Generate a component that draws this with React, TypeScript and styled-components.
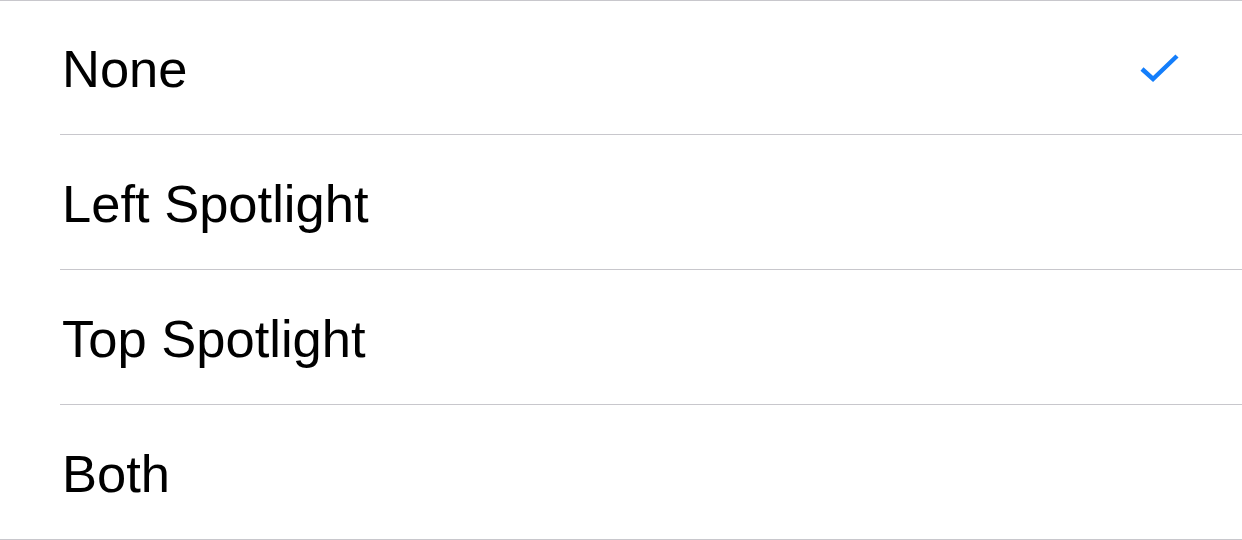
import React, { useState } from 'react';
import styled, { createGlobalStyle } from 'styled-components';

const GlobalStyle = createGlobalStyle`
  html, body {
    margin: 0;
    padding: 0;
    background: #ffffff;
  }
  body {
    font-family: "Liberation Sans", Arial, sans-serif;
    -webkit-font-smoothing: antialiased;
  }
`;

const List = styled.ul`
  list-style: none;
  margin: 0;
  padding: 0;
  width: 1242px;
  border-top: 1px solid #c8c7cc;
  border-bottom: 1px solid #c8c7cc;
`;

const Row = styled.li`
  padding-left: 60px;
  cursor: pointer;
`;

// first row is one pixel shorter, last row has the list's own bottom border
const Cell = styled.div<{ $first: boolean; $last: boolean }>`
  box-sizing: border-box;
  height: ${(p) => (p.$first ? '134px' : p.$last ? '134px' : '135px')};
  display: flex;
  align-items: center;
  justify-content: space-between;
  padding-right: 62px;
  border-bottom: ${(p) => (p.$last ? 'none' : '1px solid #c8c7cc')};
`;

const Label = styled.span`
  font-size: 52.5px;
  color: #000000;
  margin-left: 2px;
  margin-top: 2px;
`;

const Check = styled.svg`
  width: 40px;
  height: 32px;
  flex-shrink: 0;
  margin-top: 2px;
`;

const options = ['None', 'Left Spotlight', 'Top Spotlight', 'Both'];

const App: React.FC = () => {
  const [selected, setSelected] = useState('None');

  return (
    <>
      <GlobalStyle />
      <List>
        {options.map((opt, i) => (
          <Row key={opt} onClick={() => setSelected(opt)}>
            <Cell $first={i === 0} $last={i === options.length - 1}>
              <Label>{opt}</Label>
              {selected === opt && (
                <Check viewBox="0 0 40 32">
                  <polyline
                    points="2,16 13,26 37,3"
                    fill="none"
                    stroke="#147efb"
                    strokeWidth="4.5"
                  />
                </Check>
              )}
            </Cell>
          </Row>
        ))}
      </List>
    </>
  );
};

export default App;
